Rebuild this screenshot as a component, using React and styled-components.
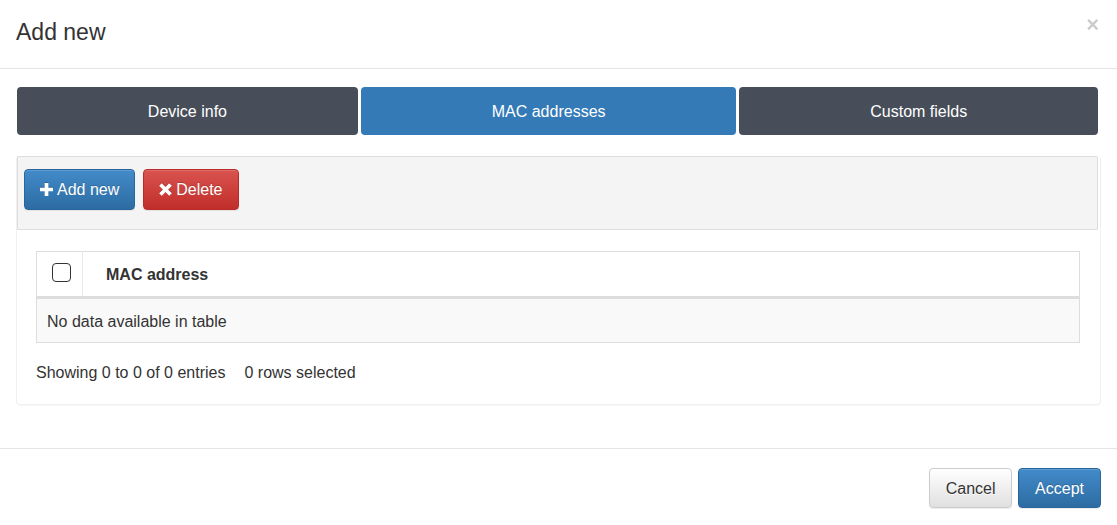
import styled, { createGlobalStyle } from 'styled-components'

const GlobalStyle = createGlobalStyle`
  html, body {
    margin: 0;
    padding: 0;
    background: #fff;
  }
  body {
    font-family: 'Liberation Sans', Arial, sans-serif;
    font-size: 16px;
    color: #333;
  }
  * { box-sizing: border-box; }
`

const Modal = styled.div`
  width: 1117px;
  height: 525px;
  background: #fff;
  display: flex;
  flex-direction: column;
`

/* ── Header ───────────────────────────── */
const Header = styled.div`
  display: flex;
  align-items: center;
  justify-content: space-between;
  height: 69px;
  padding: 0 18px 4px 16px;
  border-bottom: 1px solid #e5e5e5;
`

const Title = styled.h4`
  margin: 0;
  font-size: 23px;
  font-weight: 400;
  color: #333;
  line-height: 1.4;
`

const Close = styled.button`
  border: 0;
  background: none;
  padding: 0;
  margin-top: -14px;
  font-family: 'Liberation Sans', Arial, sans-serif;
  font-size: 22px;
  font-weight: 700;
  line-height: 1;
  color: #000;
  opacity: 0.2;
  cursor: pointer;
`

/* ── Body ─────────────────────────────── */
const Body = styled.div`
  flex: 1;
  padding: 18px 16px 0 16px;
`

const Tabs = styled.div`
  display: flex;
  gap: 3px;
  padding: 0 3px 0 1px;
  margin-bottom: 21px;
`

const Tab = styled.div`
  flex: 1 1 auto;
  height: 48px;
  padding-top: 2px;
  display: flex;
  align-items: center;
  justify-content: center;
  border-radius: 4px;
  color: #fff;
  font-size: 16px;
  background: ${p => (p.$active ? '#337ab7' : '#474e5a')};
`

const Panel = styled.div`
  border: 1px solid #f0f0f0;
  border-top: 0;
  border-radius: 4px;
  box-shadow: 0 1px 1px rgba(0, 0, 0, 0.03);
`

const Toolbar = styled.div`
  display: flex;
  gap: 8px;
  height: 74px;
  padding: 12px 6px 0 6px;
  margin-right: 2px;
  background: #f4f4f4;
  border: 1px solid #ddd;
  border-radius: 0 2px 0 0;
`

const Btn = styled.button`
  display: inline-flex;
  align-items: center;
  gap: 4px;
  height: ${p => (p.$h ? p.$h : 41)}px;
  padding: ${p => (p.$pt ? p.$pt : 0)}px ${p => (p.$px ? p.$px : 15)}px 0;
  border-radius: 4px;
  font-family: 'Liberation Sans', Arial, sans-serif;
  font-size: 16px;
  cursor: pointer;
  box-shadow: inset 0 1px 0 rgba(255, 255, 255, 0.15), 0 1px 1px rgba(0, 0, 0, 0.075);
  text-shadow: 0 -1px 0 rgba(0, 0, 0, 0.2);

  ${p => p.$variant === 'primary' && `
    color: #fff;
    border: 1px solid #2b669a;
    background: linear-gradient(to bottom, #428bca 0, #2d6ca2 100%);
  `}
  ${p => p.$variant === 'danger' && `
    color: #fff;
    border: 1px solid #b92c28;
    background: linear-gradient(to bottom, #d9534f 0, #c12e2a 100%);
  `}
  ${p => p.$variant === 'default' && `
    color: #333;
    text-shadow: 0 1px 0 #fff;
    border: 1px solid #ccc;
    background: linear-gradient(to bottom, #fff 0, #e0e0e0 100%);
  `}
`

const Content = styled.div`
  padding: 21px 20px 0 19px;
`

const Table = styled.table`
  width: 100%;
  border-collapse: collapse;
  border: 1px solid #ddd;
`

const Th = styled.th`
  height: 46px;
  text-align: left;
  font-weight: 700;
  font-size: 16px;
  color: #333;
  border-bottom: 3px solid #ddd;
  padding: 2px 0 0 ${p => (p.$check ? 15 : 23)}px;
  width: ${p => (p.$check ? '46px' : 'auto')};
  border-right: ${p => (p.$check ? '1px solid #e8e8e8' : '0')};
`

const Checkbox = styled.span`
  display: block;
  width: 19px;
  height: 19px;
  margin-top: -5px;
  border: 1px solid #333;
  border-radius: 4px;
  background: #fff;
`

const Td = styled.td`
  height: 45px;
  padding: 2px 10px 0;
  background: #f9f9f9;
  font-size: 16px;
  color: #333;
`

const Info = styled.div`
  display: flex;
  gap: 19px;
  padding: 21px 0 0 0;
  height: 61px;
  font-size: 16px;
  color: #333;
`

/* ── Footer ───────────────────────────── */
const Footer = styled.div`
  display: flex;
  justify-content: flex-end;
  gap: 6px;
  height: 77px;
  padding: 19px 16px 0 0;
  border-top: 1px solid #e5e5e5;
`

const Icon = styled.svg`
  width: 13px;
  height: 13px;
  fill: #fff;
  filter: drop-shadow(0 -1px 0 rgba(0, 0, 0, 0.2));
`

const PlusIcon = () => (
  <Icon viewBox="0 0 14 14">
    <path d="M5 0h4v5h5v4H9v5H5V9H0V5h5z" />
  </Icon>
)

const TimesIcon = () => (
  <Icon viewBox="0 0 14 14">
    <path d="M3 0.2 7 4.2l4-4L13.8 3l-4 4 4 4-2.8 2.8-4-4-4 4L.2 11l4-4-4-4z" />
  </Icon>
)

export default function App() {
  return (
    <Modal>
      <GlobalStyle />

      <Header>
        <Title>Add new</Title>
        <Close type="button">×</Close>
      </Header>

      <Body>
        <Tabs>
          <Tab>Device info</Tab>
          <Tab $active>MAC addresses</Tab>
          <Tab>Custom fields</Tab>
        </Tabs>

        <Panel>
          <Toolbar>
            <Btn $variant="primary" $px={15}>
              <PlusIcon /> Add new
            </Btn>
            <Btn $variant="danger" $px={15}>
              <TimesIcon /> Delete
            </Btn>
          </Toolbar>

          <Content>
            <Table>
              <thead>
                <tr>
                  <Th $check><Checkbox /></Th>
                  <Th>MAC address</Th>
                </tr>
              </thead>
              <tbody>
                <tr>
                  <Td colSpan={2}>No data available in table</Td>
                </tr>
              </tbody>
            </Table>

            <Info>
              <span>Showing 0 to 0 of 0 entries</span>
              <span>0 rows selected</span>
            </Info>
          </Content>
        </Panel>
      </Body>

      <Footer>
        <Btn $variant="default" $h={40} $px={15.5} $pt={2}>Cancel</Btn>
        <Btn $variant="primary" $h={40} $px={16} $pt={2}>Accept</Btn>
      </Footer>
    </Modal>
  )
}
